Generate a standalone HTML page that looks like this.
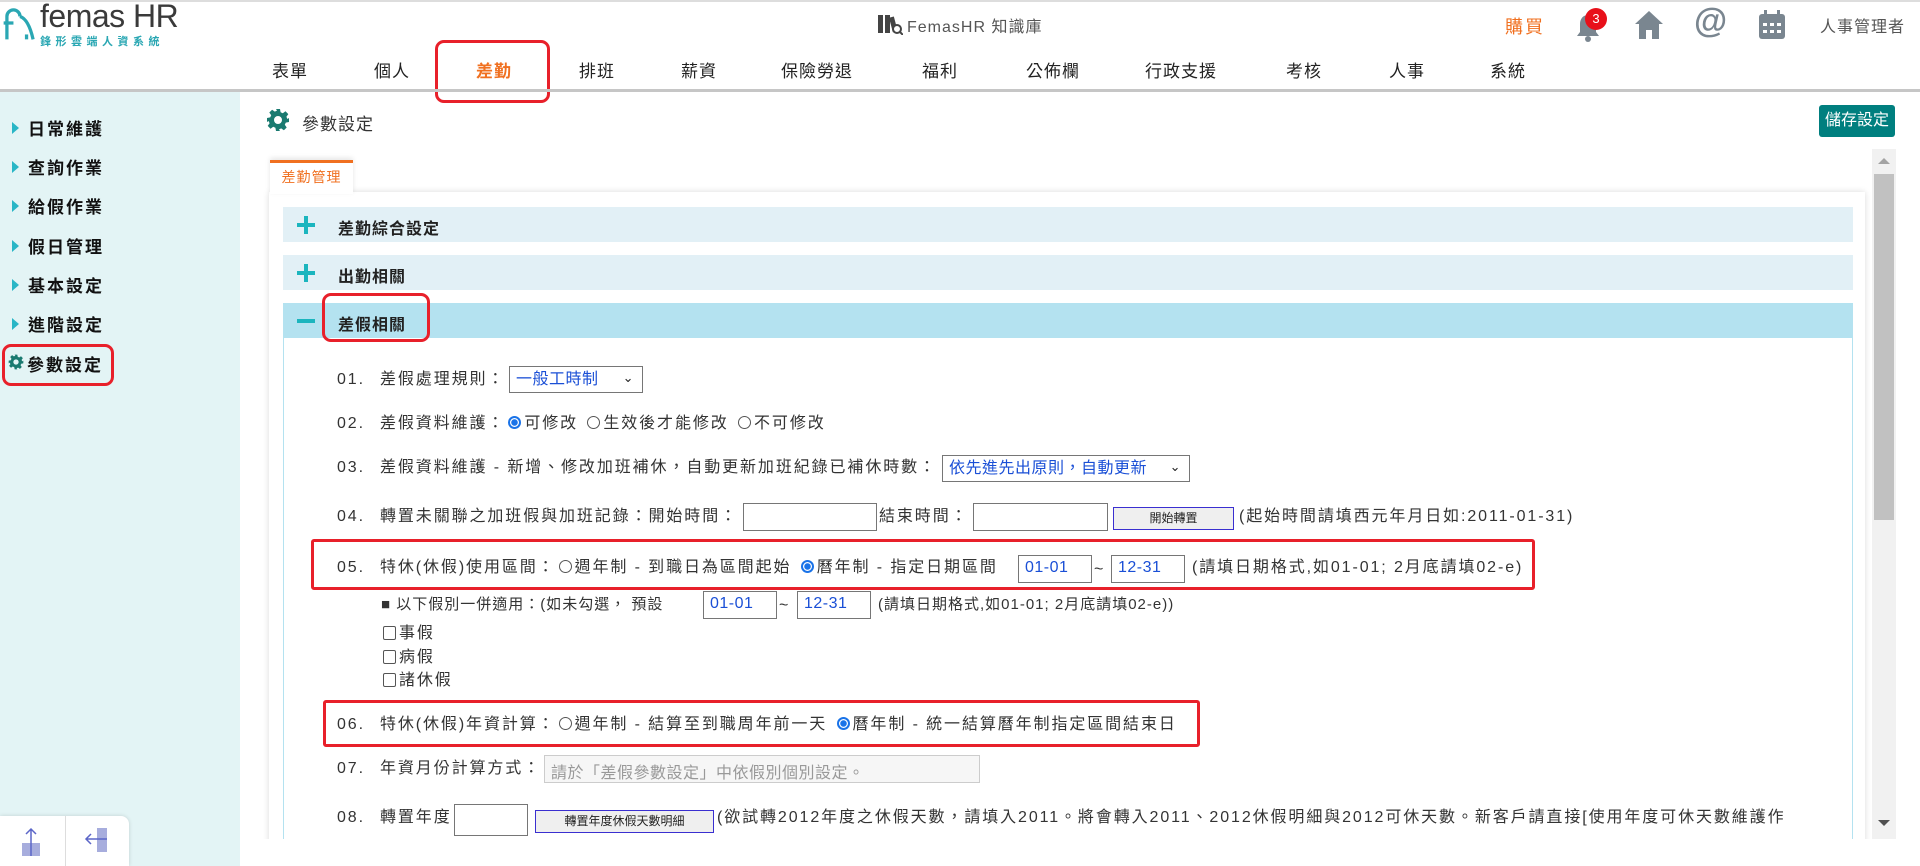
<!DOCTYPE html>
<html><head><meta charset="utf-8">
<style>
*{margin:0;padding:0;box-sizing:border-box}
body{width:1920px;height:866px;overflow:hidden;background:#fff;font-family:"Liberation Sans","Noto Sans CJK TC",sans-serif;color:#333;position:relative}
.a{position:absolute;white-space:nowrap}
.nav{top:57px;font-size:17px;color:#222;letter-spacing:1px}
.side{left:12px;font-size:17px;font-weight:bold;color:#111;letter-spacing:2px}
.side i{display:inline-block;width:0;height:0;border-top:6px solid transparent;border-bottom:6px solid transparent;border-left:7px solid #29b6c6;margin-right:9px;vertical-align:1px}
.acc{left:283px;width:1570px;height:35px;background:#e2f0f6;font-size:16px;font-weight:bold;color:#222;letter-spacing:1px}
.acc span{position:absolute;left:55px;top:8px}
.plus{position:absolute;left:14px;top:9px;width:18px;height:18px}
.plus:before{content:"";position:absolute;left:7px;top:0;width:4px;height:18px;background:#1bb5be}
.plus:after{content:"";position:absolute;left:0;top:7px;width:18px;height:4px;background:#1bb5be}
.row{left:337px;font-size:16px;color:#333;letter-spacing:1.9px;line-height:20px}
.row b{font-weight:normal;display:inline-block;width:43px}
.box{position:absolute;border:1px solid #767676;background:#fff;font-size:16px;color:#1a4fd6;padding:3px 6px;letter-spacing:0.5px}
.btn{position:absolute;border:1px solid #3a2fd0;background:#efefef;font-size:12px;color:#222;text-align:center;line-height:20px}
.rd{display:inline-block;width:13px;height:13px;border:1px solid #555;border-radius:50%;vertical-align:-1px;margin:0 3px}
.rd.on{border:2px solid #1a73e8;background:radial-gradient(#1a73e8 3px,#fff 3.5px)}
.cb{display:inline-block;width:13px;height:14px;border:1px solid #555;border-radius:2px;vertical-align:-2px;margin-right:3px}
.red{position:absolute;border:3px solid #e8202a;border-radius:3px}
.ic{fill:#7a8690}
</style></head><body>
<div class="a" style="left:0;top:0;width:1920px;height:2px;background:#ddd"></div>
<svg width="0" height="0" style="position:absolute"><defs><symbol id="gear" viewBox="0 0 24 24"><path fill="#1a7a70" d="M10 1h4l.6 3.2 2.2 1 2.7-1.9 2.8 2.8-1.9 2.7 1 2.2L23 10v4l-3.2.6-1 2.2 1.9 2.7-2.8 2.8-2.7-1.9-2.2 1L14 23h-4l-.6-3.2-2.2-1-2.7 1.9-2.8-2.8 1.9-2.7-1-2.2L1 14v-4l3.2-.6 1-2.2-1.9-2.7 2.8-2.8 2.7 1.9 2.2-1zM12 8a4 4 0 1 0 0 8 4 4 0 0 0 0-8z"/></symbol></defs></svg>
<!-- logo -->
<svg class="a" style="left:2px;top:3px" width="36" height="40" viewBox="0 0 44 40"><path d="M6 40V12a8 8 0 0 1 16 0" fill="none" stroke="#2aa7b3" stroke-width="4"/><path d="M2 20h12" stroke="#2aa7b3" stroke-width="4"/><path d="M22 12c6 2 12 10 16 28" fill="none" stroke="#2aa7b3" stroke-width="4"/><path d="M30 40v-6" stroke="#2aa7b3" stroke-width="4"/></svg>
<div class="a" style="left:40px;top:-2px;font-size:32px;color:#3a3a3a;letter-spacing:-0.5px">femas HR</div>
<div class="a" style="left:40px;top:33px;font-size:11px;color:#2aa7b3;letter-spacing:4.5px;font-weight:bold">鋒形雲端人資系統</div>
<!-- kb -->
<svg class="a" style="left:877px;top:13px" width="26" height="22" viewBox="0 0 26 22"><rect x="1" y="2" width="5" height="18" fill="#444"/><rect x="8" y="2" width="5" height="18" fill="#444"/><rect x="14" y="4" width="5" height="15" fill="#444" transform="rotate(-15 16 12)"/><circle cx="20" cy="16" r="4" fill="#fff" stroke="#444" stroke-width="2"/><path d="M23 19l3 3" stroke="#444" stroke-width="2"/></svg>
<div class="a" style="left:907px;top:13px;font-size:16px;color:#555;letter-spacing:1px">FemasHR 知識庫</div>
<!-- right icons -->
<div class="a" style="left:1505px;top:13px;font-size:18px;color:#f07020;letter-spacing:2px">購買</div>
<svg class="a" style="left:1576px;top:13px" width="24" height="30" viewBox="0 0 24 30"><path class="ic" d="M12 2c-5 0-8 4-8 9v8l-3 4h22l-3-4v-8c0-5-3-9-8-9z"/><circle class="ic" cx="12" cy="26" r="3"/></svg>
<div class="a" style="left:1585px;top:8px;width:22px;height:22px;border-radius:50%;background:#e8101a;color:#fff;font-size:13px;text-align:center;line-height:22px">3</div>
<svg class="a" style="left:1634px;top:10px" width="30" height="30" viewBox="0 0 30 30"><path class="ic" d="M15 1L1 14h4v15h7v-9h6v9h7V14h4z"/></svg>
<div class="a" style="left:1694px;top:2px;font-size:34px;color:#7a8690;font-weight:bold">@</div>
<svg class="a" style="left:1757px;top:10px" width="30" height="30" viewBox="0 0 30 30"><rect class="ic" x="2" y="4" width="26" height="25" rx="3"/><rect x="7" y="0" width="3" height="6" class="ic"/><rect x="20" y="0" width="3" height="6" class="ic"/><g fill="#fff"><rect x="6" y="13" width="4" height="3"/><rect x="13" y="13" width="4" height="3"/><rect x="20" y="13" width="4" height="3"/><rect x="6" y="20" width="4" height="3"/><rect x="13" y="20" width="4" height="3"/><rect x="20" y="20" width="4" height="3"/></g></svg>
<div class="a" style="left:1820px;top:13px;font-size:16px;color:#555;letter-spacing:1px">人事管理者</div>
<!-- nav -->
<div class="a nav" style="left:272px">表單</div>
<div class="a nav" style="left:374px">個人</div>
<div class="a nav" style="left:476px;color:#f07020;font-weight:bold">差勤</div>
<div class="a nav" style="left:579px">排班</div>
<div class="a nav" style="left:681px">薪資</div>
<div class="a nav" style="left:781px">保險勞退</div>
<div class="a nav" style="left:922px">福利</div>
<div class="a nav" style="left:1026px">公佈欄</div>
<div class="a nav" style="left:1145px">行政支援</div>
<div class="a nav" style="left:1286px">考核</div>
<div class="a nav" style="left:1389px">人事</div>
<div class="a nav" style="left:1490px">系統</div>
<div class="red" style="left:435px;top:40px;width:115px;height:63px;border-radius:9px"></div>
<div class="a" style="left:0;top:89px;width:1920px;height:3px;background:#c6c6c6"></div>
<!-- sidebar -->
<div class="a" style="left:0;top:92px;width:240px;height:774px;background:#e3f4f5"></div>
<div class="a side" style="top:115px"><i></i>日常維護</div>
<div class="a side" style="top:154px"><i></i>查詢作業</div>
<div class="a side" style="top:193px"><i></i>給假作業</div>
<div class="a side" style="top:233px"><i></i>假日管理</div>
<div class="a side" style="top:272px"><i></i>基本設定</div>
<div class="a side" style="top:311px"><i></i>進階設定</div>
<svg class="a" style="left:8px;top:354px" width="16" height="16"><use href="#gear"/></svg>
<div class="a side" style="top:351px;left:27px">參數設定</div>
<div class="red" style="left:2px;top:344px;width:112px;height:42px;border-radius:9px"></div>
<div class="a" style="left:0;top:816px;width:129px;height:50px;background:#fff;border-radius:0 8px 0 0;box-shadow:0 0 4px rgba(0,0,0,.15)"></div>
<div class="a" style="left:65px;top:816px;width:1px;height:50px;background:#ddd"></div>
<svg class="a" style="left:20px;top:826px" width="24" height="32"><rect x="2" y="17" width="18" height="13" fill="#a7addd"/><path d="M11 30V3M6 8l5-5 5 5" stroke="#5c66c8" stroke-width="1.5" fill="none"/></svg>
<svg class="a" style="left:83px;top:826px" width="26" height="30"><rect x="14" y="2" width="10" height="24" fill="#a7addd"/><path d="M24 13H3M8 8l-5 5 5 5" stroke="#5c66c8" stroke-width="1.5" fill="none"/></svg>
<!-- title -->
<svg class="a" style="left:266px;top:108px" width="24" height="24"><use href="#gear"/></svg>
<div class="a" style="left:302px;top:110px;font-size:17px;color:#333;letter-spacing:1px">參數設定</div>
<div class="a" style="left:1819px;top:105px;width:76px;height:32px;background:#007f7f;border-radius:3px;color:#fff;font-size:16px;text-align:center;line-height:32px">儲存設定</div>
<!-- scrollbar -->
<div class="a" style="left:1872px;top:149px;width:24px;height:690px;background:#f1f1f1"></div>
<div class="a" style="left:1874px;top:174px;width:20px;height:346px;background:#c1c1c1"></div>
<div class="a" style="left:1878px;top:158px;border-left:6px solid transparent;border-right:6px solid transparent;border-bottom:6px solid #a3a3a3"></div>
<div class="a" style="left:1878px;top:820px;border-left:6px solid transparent;border-right:6px solid transparent;border-top:6px solid #505050"></div>
<!-- panel -->
<div class="a" style="left:269px;top:192px;width:1596px;height:660px;background:#fff;box-shadow:0 0 6px rgba(0,0,0,.15)"></div>
<div class="a" style="left:270px;top:160px;width:83px;height:34px;background:#fff;box-shadow:0 -2px 5px rgba(0,0,0,.1);border-top:3px solid #f07020;color:#f07020;font-size:14px;text-align:center;line-height:28px;letter-spacing:1px">差勤管理</div>
<div class="a acc" style="top:207px"><div class="plus"></div><span>差勤綜合設定</span></div>
<div class="a acc" style="top:255px"><div class="plus"></div><span>出勤相關</span></div>
<div class="a acc" style="top:303px;background:#b4e2f0"><div style="position:absolute;left:14px;top:16px;width:18px;height:4px;background:#1bb5be"></div><span>差假相關</span></div>
<div class="a" style="left:283px;top:338px;width:1px;height:520px;background:#b4e2f0"></div>
<div class="a" style="left:1852px;top:338px;width:1px;height:520px;background:#b4e2f0"></div>
<div class="red" style="left:322px;top:293px;width:108px;height:49px;border-radius:9px"></div>
<!-- rows -->
<div class="a row" style="top:370px"><b>01.</b>差假處理規則：</div>
<div class="box" style="left:509px;top:366px;width:134px;height:27px;line-height:19px">一般工時制<span style="position:absolute;right:8px;top:1px;color:#222;font-size:13px">⌄</span></div>
<div class="a row" style="top:414px"><b>02.</b>差假資料維護：<span class="rd on"></span>可修改 <span class="rd"></span>生效後才能修改 <span class="rd"></span>不可修改</div>
<div class="a row" style="top:458px"><b>03.</b>差假資料維護 - 新增、修改加班補休，自動更新加班紀錄已補休時數：</div>
<div class="box" style="left:942px;top:455px;width:248px;height:27px;line-height:19px">依先進先出原則，自動更新<span style="position:absolute;right:8px;top:1px;color:#222;font-size:13px">⌄</span></div>
<div class="a row" style="top:507px"><b>04.</b>轉置未關聯之加班假與加班記錄：開始時間：</div>
<div class="box" style="left:743px;top:503px;width:134px;height:28px"></div>
<div class="a row" style="left:879px;top:507px">結束時間：</div>
<div class="box" style="left:973px;top:503px;width:135px;height:28px"></div>
<div class="btn" style="left:1113px;top:507px;width:121px;height:23px">開始轉置</div>
<div class="a row" style="left:1239px;top:507px">(起始時間請填西元年月日如:2011-01-31)</div>
<div class="a row" style="top:558px"><b>05.</b>特休(休假)使用區間：<span class="rd"></span>週年制 - 到職日為區間起始 <span class="rd on"></span>曆年制 - 指定日期區間</div>
<div class="box" style="left:1018px;top:555px;width:74px;height:28px">01-01</div>
<div class="a row" style="left:1094px;top:560px">~</div>
<div class="box" style="left:1111px;top:555px;width:74px;height:28px">12-31</div>
<div class="a row" style="left:1192px;top:558px">(請填日期格式,如01-01; 2月底請填02-e)</div>
<div class="red" style="left:311px;top:539px;width:1224px;height:51px"></div>
<div class="a row" style="left:381px;top:595px;font-size:15px;letter-spacing:1px">■ 以下假別一併適用：(如未勾選， 預設</div>
<div class="box" style="left:703px;top:591px;width:74px;height:28px">01-01</div>
<div class="a row" style="left:779px;top:596px">~</div>
<div class="box" style="left:797px;top:591px;width:74px;height:28px">12-31</div>
<div class="a row" style="left:878px;top:595px;font-size:15px;letter-spacing:1px">(請填日期格式,如01-01; 2月底請填02-e))</div>
<div class="a row" style="left:383px;top:624px"><span class="cb"></span>事假</div>
<div class="a row" style="left:383px;top:648px"><span class="cb"></span>病假</div>
<div class="a row" style="left:383px;top:671px"><span class="cb"></span>諸休假</div>
<div class="a row" style="top:715px"><b>06.</b>特休(休假)年資計算：<span class="rd"></span>週年制 - 結算至到職周年前一天 <span class="rd on"></span>曆年制 - 統一結算曆年制指定區間結束日</div>
<div class="red" style="left:323px;top:700px;width:877px;height:47px"></div>
<div class="a row" style="top:759px"><b>07.</b>年資月份計算方式：</div>
<div class="box" style="left:544px;top:755px;width:436px;height:28px;background:#f6f6f6;border-color:#ccc;color:#999">請於「差假參數設定」中依假別個別設定。</div>
<div style="position:absolute;left:284px;top:790px;width:1568px;height:48px;overflow:hidden">
<div class="a row" style="left:53px;top:18px"><b>08.</b>轉置年度</div>
<div class="box" style="left:170px;top:14px;width:74px;height:32px"></div>
<div class="btn" style="left:251px;top:20px;width:179px;height:23px">轉置年度休假天數明細</div>
<div class="a row" style="left:433px;top:18px">(欲試轉2012年度之休假天數，請填入2011。將會轉入2011、2012休假明細與2012可休天數。新客戶請直接[使用年度可休天數維護作</div>
</div>
<div class="a" style="left:240px;top:839px;width:1680px;height:27px;background:#fff"></div>
</body></html>
